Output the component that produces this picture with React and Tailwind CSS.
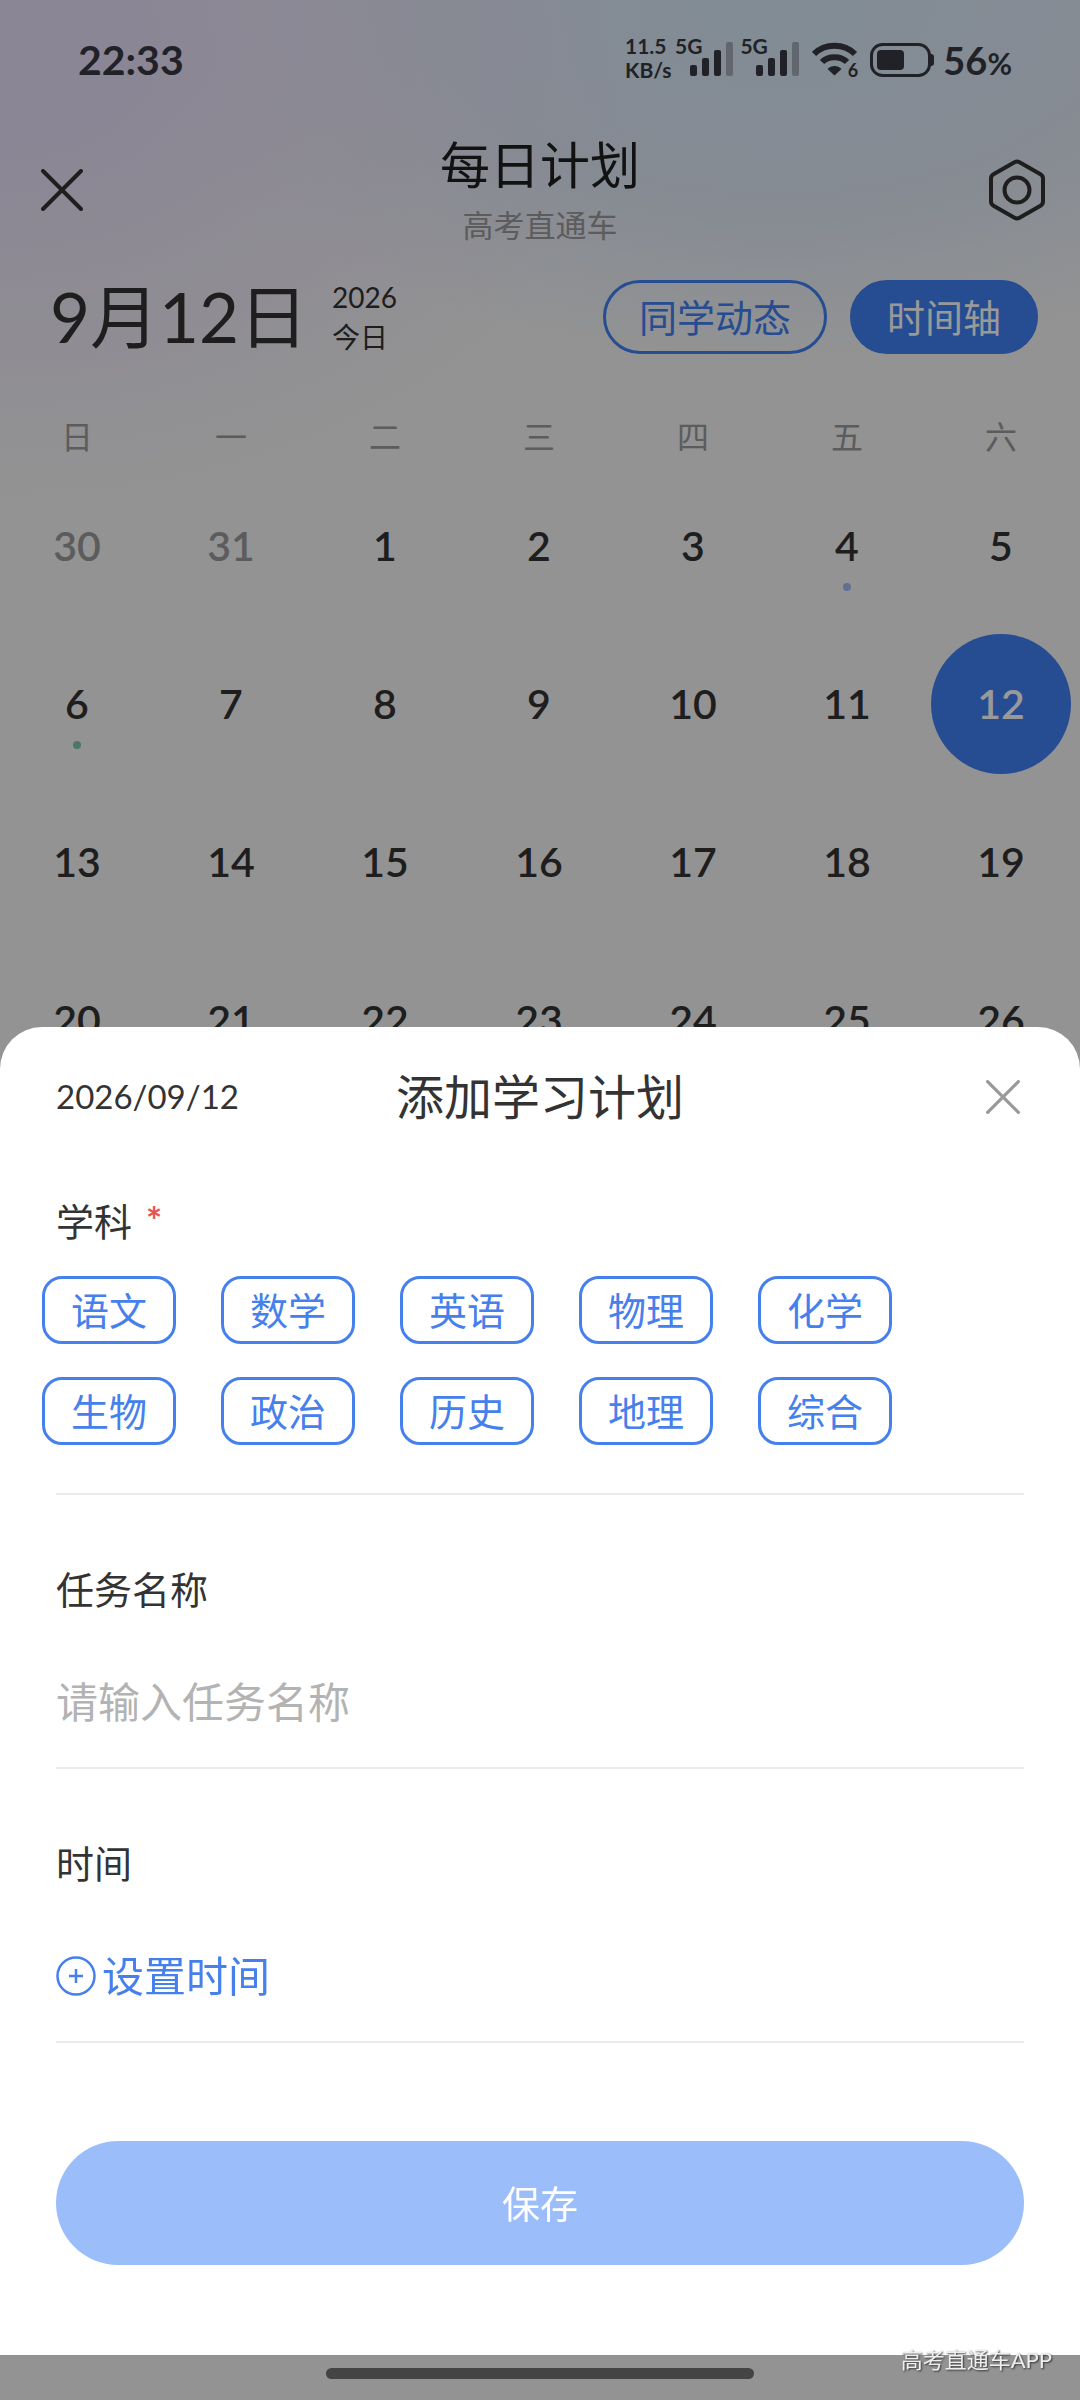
import React, { useState } from 'react';

const WEEKDAYS = ['日', '一', '二', '三', '四', '五', '六'];
const SUBJECTS = ['语文', '数学', '英语', '物理', '化学', '生物', '政治', '历史', '地理', '综合'];

const DAYS = [
  { day: 30, outside: true },
  { day: 31, outside: true },
  ...Array.from({ length: 26 }, (_, i) => ({ day: i + 1 })),
];

const MARKS = {
  4: 'bg-[#a6b8f5]',
  6: 'bg-[#7fc4b4]',
};

function Signal() {
  return (
    <div className="flex h-11 items-end">
      <span className="-mr-3 self-start text-[21px] font-bold leading-4">5G</span>
      <svg width="44" height="40" viewBox="0 0 44 40" fill="currentColor">
        <rect x="0" y="23" width="7" height="11" rx="2" />
        <rect x="12" y="16" width="7" height="18" rx="2" />
        <rect x="24" y="8" width="7" height="26" rx="2" />
        <rect x="36" y="0" width="7" height="34" rx="2" opacity="0.35" />
      </svg>
    </div>
  );
}

function Wifi() {
  return (
    <div className="flex h-10 items-end">
      <svg width="46" height="38" viewBox="0 0 46 38" fill="none" stroke="currentColor">
        <path d="M2 12 C13 1 32 1 43 12" strokeWidth="6" />
        <path d="M10 20 C16 13.500 29 13.500 35 20" strokeWidth="6" />
        <path d="M15.500 27 C19 23 26 23 29.500 27 L22.500 33.500 Z" fill="currentColor" stroke="none" />
      </svg>
      <span className="-ml-2.5 text-[18px] font-bold leading-5">6</span>
    </div>
  );
}

function BatteryIcon() {
  return (
    <svg width="65" height="36" viewBox="0 0 65 36" fill="none" className="shrink-0">
      <rect x="1.500" y="2.500" width="58" height="31" rx="11" stroke="currentColor" strokeWidth="3" />
      <rect x="7" y="8" width="27" height="20" rx="4" fill="currentColor" />
      <path d="M60 12 h1 a3 3 0 0 1 3 3 v6 a3 3 0 0 1 -3 3 h-1 z" fill="currentColor" />
    </svg>
  );
}

function StatusBar() {
  return (
    <div className="flex h-[120px] items-center justify-between pl-[78px] pr-[68px] text-[#383a44]">
      <span className="text-[41px] font-bold">22:33</span>
      <div className="flex items-center">
        <div className="mr-1 w-[46px] pb-1 text-[21px] font-bold leading-6">
          <div>11.5</div>
          <div>KB/s</div>
        </div>
        <Signal />
        <div className="ml-1.5 flex items-center gap-3">
          <Signal />
          <Wifi />
          <BatteryIcon />
        </div>
        <div className="ml-2 font-bold">
          <span className="text-[38px]">56</span>
          <span className="text-[30px]">%</span>
        </div>
      </div>
    </div>
  );
}

function CloseIcon({ size }) {
  return (
    <svg width={size} height={size} viewBox="0 0 42 42" fill="none" stroke="currentColor" strokeWidth="4" strokeLinecap="round">
      <path d="M2 2 L40 40 M40 2 L2 40" />
    </svg>
  );
}

function PageHeader() {
  return (
    <header className="flex items-center justify-between px-[35px] pt-[15px]">
      <button aria-label="关闭" className="flex w-[60px] justify-start pl-1.5 text-[#333]">
        <CloseIcon size={42} />
      </button>
      <div className="text-center">
        <h1 className="text-[50px] leading-[60px] text-[#1f1f1f]">每日计划</h1>
        <p className="mt-2.5 text-[31px] leading-10 text-[#999]">高考直通车</p>
      </div>
      <button aria-label="设置" className="flex w-[60px] justify-end text-[#333]">
        <svg width="56" height="62" viewBox="0 0 56 62" fill="none" stroke="currentColor" strokeWidth="4" strokeLinejoin="round">
          <path d="M25.500 3.200 Q28 1.800 30.500 3.200 L51.500 15.200 Q54 16.700 54 19.500 V42.500 Q54 45.300 51.500 46.800 L30.500 58.800 Q28 60.200 25.500 58.800 L4.500 46.800 Q2 45.300 2 42.500 V19.500 Q2 16.700 4.500 15.200 Z" />
          <circle cx="28" cy="31" r="12.500" />
        </svg>
      </button>
    </header>
  );
}

function DateBar() {
  return (
    <div className="mt-8 flex items-center pl-[50px] pr-[42px] text-[#333]">
      <h2 className="text-[69px] leading-[74px]">9月12日</h2>
      <div className="ml-6 text-[28px] leading-10">
        <div>2026</div>
        <div>今日</div>
      </div>
      <div className="ml-auto flex gap-[23px] text-[38px] leading-[68px]">
        <button className="rounded-full border-[3px] border-[#4080f3] px-[33px] text-[#4080f3]">同学动态</button>
        <button className="rounded-full border-[3px] border-[#4080f3] bg-[#4080f3] px-[34px] text-white">时间轴</button>
      </div>
    </div>
  );
}

function DayCell({ item, selected, onSelect }) {
  const { day, outside } = item;
  const mark = !outside && MARKS[day];

  return (
    <div className="relative flex h-[158px] items-center justify-center">
      <button
        onClick={() => onSelect(day)}
        className={`size-[140px] rounded-full text-[41px] font-semibold ${
          selected ? 'bg-[#4080f3] text-white' : outside ? 'text-[#999]' : 'text-[#333]'
        }`}
      >
        {day}
      </button>
      {mark && <span className={`absolute bottom-[34px] size-2 rounded-full ${mark}`} />}
    </div>
  );
}

function Calendar() {
  const [selected, setSelected] = useState(12);

  return (
    <div className="mt-[50px] pr-0.5">
      <div className="grid grid-cols-7 text-center text-[32px] leading-[60px] text-[#999]">
        {WEEKDAYS.map((name) => (
          <span key={name}>{name}</span>
        ))}
      </div>
      <div className="grid grid-cols-7">
        {DAYS.map((item) => (
          <DayCell
            key={`${item.outside ? 'prev' : 'cur'}-${item.day}`}
            item={item}
            selected={!item.outside && item.day === selected}
            onSelect={setSelected}
          />
        ))}
      </div>
    </div>
  );
}

function AddPlanSheet() {
  const [subject, setSubject] = useState(null);
  const [name, setName] = useState('');

  return (
    <section role="dialog" aria-label="添加学习计划" className="rounded-t-[42px] bg-white px-14 pb-[90px] text-[38px] text-[#333]">
      <div className="grid h-[140px] grid-cols-3 items-center">
        <span className="text-[33px]">2026/09/12</span>
        <h2 className="whitespace-nowrap text-center text-[48px]">添加学习计划</h2>
        <button aria-label="关闭" className="mr-1 justify-self-end text-[#999]">
          <CloseIcon size={34} />
        </button>
      </div>

      <div className="border-b-2 border-[#ebebeb] pb-12 pt-6">
        <div className="flex items-start gap-3.5 leading-[60px]">
          学科
          <span className="font-bold leading-[58px] text-[#e8554f]">*</span>
        </div>
        <div className="-ml-3.5 mt-[25px] flex flex-wrap gap-x-[45px] gap-y-[33px]">
          {SUBJECTS.map((item) => (
            <button
              key={item}
              aria-pressed={subject === item}
              onClick={() => setSubject(item)}
              className={`rounded-[20px] border-[3px] border-[#4680ec] px-[26px] leading-[62px] ${
                subject === item ? 'bg-[#4680ec] text-white' : 'text-[#4680ec]'
              }`}
            >
              {item}
            </button>
          ))}
        </div>
      </div>

      <div className="border-b-2 border-[#ebebeb] pb-[35px] pt-16">
        <label htmlFor="task-name" className="block leading-[60px]">任务名称</label>
        <input
          id="task-name"
          value={name}
          onChange={(e) => setName(e.target.value)}
          placeholder="请输入任务名称"
          className="mt-[53px] block h-[60px] w-full text-[42px] outline-none placeholder:text-[#b3b3b3]"
        />
      </div>

      <div className="border-b-2 border-[#ebebeb] pb-[35px] pt-16">
        <div className="leading-[60px]">时间</div>
        <button className="mt-[53px] flex h-[60px] items-center gap-1.5 text-[42px] text-[#4680ec]">
          <svg width="40" height="40" viewBox="0 0 40 40" fill="none" stroke="currentColor" strokeWidth="2.500">
            <circle cx="20" cy="20" r="18.500" />
            <path d="M20 13 V27 M13 20 H27" />
          </svg>
          设置时间
        </button>
      </div>

      <button className="mt-[98px] h-[124px] w-full rounded-full bg-[#9bbefb] text-white">保存</button>
    </section>
  );
}

export default function App() {
  return (
    <div className="relative min-h-screen overflow-hidden bg-[#f5f5f5] bg-[radial-gradient(ellipse_60%_19%_at_0%_2%,#e7dff8_0%,#e7dff8_20%,#e7dff800_100%),radial-gradient(ellipse_60%_15%_at_72%_0%,#d8eafa_0%,#dfe8f6_55%,#dfe8f600_100%)] font-[Lato,'Noto_Sans_CJK_SC',sans-serif]">
      <StatusBar />
      <PageHeader />
      <DateBar />
      <Calendar />

      <div className="fixed inset-0 flex flex-col justify-end bg-black/40">
        <AddPlanSheet />
        <div className="flex h-[45px] items-center justify-center pb-2">
          <div className="h-[11px] w-[428px] rounded-full bg-[#444]" />
        </div>
        <span className="absolute bottom-[26px] right-7 text-[22px] leading-7 text-[#eee] [text-shadow:1px_1px_2px_#333]">高考直通车APP</span>
      </div>
    </div>
  );
}
